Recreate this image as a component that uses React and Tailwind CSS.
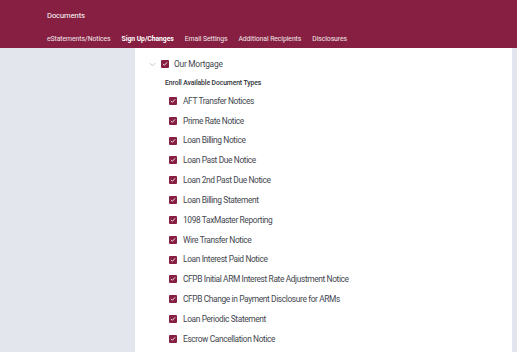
const docTypes = [
  'AFT Transfer Notices',
  'Prime Rate Notice',
  'Loan Billing Notice',
  'Loan Past Due Notice',
  'Loan 2nd Past Due Notice',
  'Loan Billing Statement',
  '1098 TaxMaster Reporting',
  'Wire Transfer Notice',
  'Loan Interest Paid Notice',
  'CFPB Initial ARM Interest Rate Adjustment Notice',
  'CFPB Change in Payment Disclosure for ARMs',
  'Loan Periodic Statement',
  'Escrow Cancellation Notice',
];

const tabs = ['eStatements/Notices', 'Sign Up/Changes', 'Email Settings', 'Additional Recipients', 'Disclosures'];

function Check() {
  return (
    <span className="w-[8px] h-[8px] bg-[#861f41] rounded-[1px] flex items-center justify-center shrink-0">
      <svg width="6" height="6" viewBox="0 0 10 10" fill="none">
        <path d="M2 5.2l2 2 4-4.5" stroke="white" strokeWidth="1.4" strokeLinecap="round" strokeLinejoin="round" />
      </svg>
    </span>
  );
}

export default function App() {
  return (
    <div className="w-[517px] h-[352px] overflow-hidden flex flex-col font-['Roboto',sans-serif] bg-white">
      <header className="h-[48px] bg-[#861f41] text-white pl-[47px] shrink-0">
        <div className="pt-[11px] text-[7.6px] leading-[10px] tracking-[-0.1px]">Documents</div>
        <nav className="flex gap-[11px] mt-[13px] text-[6.8px] leading-[10px] tracking-[-0.05px]">
          {tabs.map((t) => (
            <span key={t} className={t === 'Sign Up/Changes' ? 'font-bold' : 'text-white/90'}>
              {t}
            </span>
          ))}
        </nav>
      </header>
      <div className="flex flex-1 min-h-0">
        <aside className="w-[135px] bg-[#e3e6ed] shrink-0" />
        <main className="flex-1 pl-[14px] pt-[10px]">
          <div className="flex items-center h-[12px]">
            <svg width="7" height="5" viewBox="0 0 8 5" fill="none" className="mr-[5px]">
              <path d="M1 1l3 3 3-3" stroke="#b6b9c0" strokeWidth="1" />
            </svg>
            <Check />
            <span className="ml-[5px] text-[8.4px] tracking-[-0.25px] text-[#44474f]">Our Mortgage</span>
          </div>
          <div className="ml-[16px] mt-[7px] text-[6.8px] leading-[12px] tracking-[-0.1px] text-[#2f3237] font-medium">
            Enroll Available Document Types
          </div>
          <ul className="ml-[20px] mt-[6px] flex flex-col gap-[7.83px]">
            {docTypes.map((d) => (
              <li key={d} className="flex items-center h-[12px]">
                <Check />
                <span className="ml-[6px] text-[8.4px] tracking-[-0.38px] text-[#44474f]">{d}</span>
              </li>
            ))}
          </ul>
        </main>
        <div className="w-[5px] bg-[#e3e6ed] shrink-0" />
      </div>
    </div>
  );
}
